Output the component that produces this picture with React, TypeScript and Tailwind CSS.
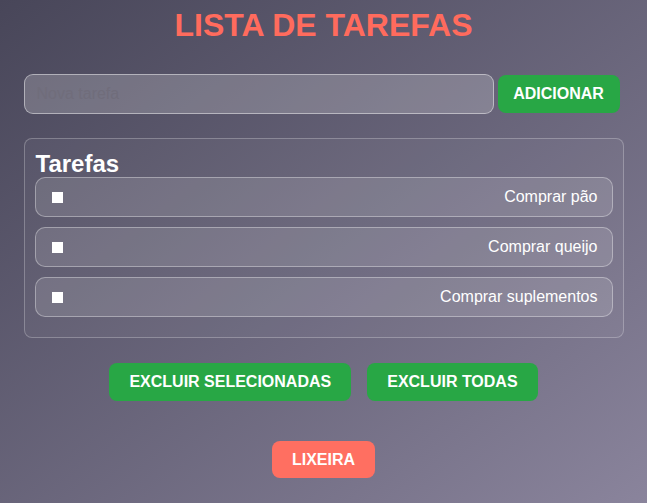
import { useState } from 'react';

type Task = { id: number; text: string; done: boolean };

const initialTasks: Task[] = [
  { id: 1, text: 'Comprar pão', done: false },
  { id: 2, text: 'Comprar queijo', done: false },
  { id: 3, text: 'Comprar suplementos', done: false },
];

export default function App() {
  const [tasks, setTasks] = useState<Task[]>(initialTasks);
  const [value, setValue] = useState('');

  const toggle = (id: number) =>
    setTasks(ts => ts.map(t => (t.id === id ? { ...t, done: !t.done } : t)));

  return (
    <div className="min-h-[503px] w-full bg-gradient-to-br from-[#484659] to-[#8a849c] font-['Liberation_Sans',Arial,sans-serif] text-white">
      <div className="w-[600px] mx-auto pt-[7px] pb-[25px]">
        {/* Title */}
        <h1 className="text-center text-[32px] leading-[37px] font-bold text-[#ff6b5d]">LISTA DE TAREFAS</h1>

        {/* New task row */}
        <div className="flex items-center mt-[30px]">
          <input
            value={value}
            onChange={e => setValue(e.target.value)}
            placeholder="Nova tarefa"
            className="w-[470px] h-[40px] rounded-[9px] border border-white/45 bg-white/20 px-[12px] text-[16px] text-white outline-none placeholder:text-[#706d7b]"
          />
          <button className="ml-[4px] h-[38px] w-[122px] rounded-[8px] bg-[#28a745] text-[16px] font-bold text-white">
            ADICIONAR
          </button>
        </div>

        {/* Task panel */}
        <div className="mt-[24px] rounded-[8px] border border-white/25 bg-white/[0.04] px-[10px] pt-[12px] pb-[20px]">
          <h2 className="text-[24px] leading-[26px] font-bold pl-[1px]">Tarefas</h2>
          <div className="flex flex-col gap-[10px]">
            {tasks.map(task => (
              <div
                key={task.id}
                className="flex items-center justify-between h-[40px] rounded-[10px] border border-white/35 bg-white/[0.12] pl-[16px] pr-[14px]"
                onClick={() => toggle(task.id)}
              >
                <span className="w-[11px] h-[11px] bg-white flex items-center justify-center">
                  {task.done && <span className="w-[6px] h-[6px] bg-[#28a745]" />}
                </span>
                <span className="text-[16px]">{task.text}</span>
              </div>
            ))}
          </div>
        </div>

        {/* Actions */}
        <div className="flex justify-center gap-[16px] mt-[25px]">
          <button className="h-[38px] px-[20px] rounded-[8px] bg-[#28a745] text-[16px] font-bold">EXCLUIR SELECIONADAS</button>
          <button className="h-[38px] px-[20px] rounded-[8px] bg-[#28a745] text-[16px] font-bold">EXCLUIR TODAS</button>
        </div>

        <div className="flex justify-center mt-[40px]">
          <button className="h-[37px] px-[20px] rounded-[8px] bg-[#ff6f61] text-[16px] font-bold">LIXEIRA</button>
        </div>
      </div>
    </div>
  );
}
